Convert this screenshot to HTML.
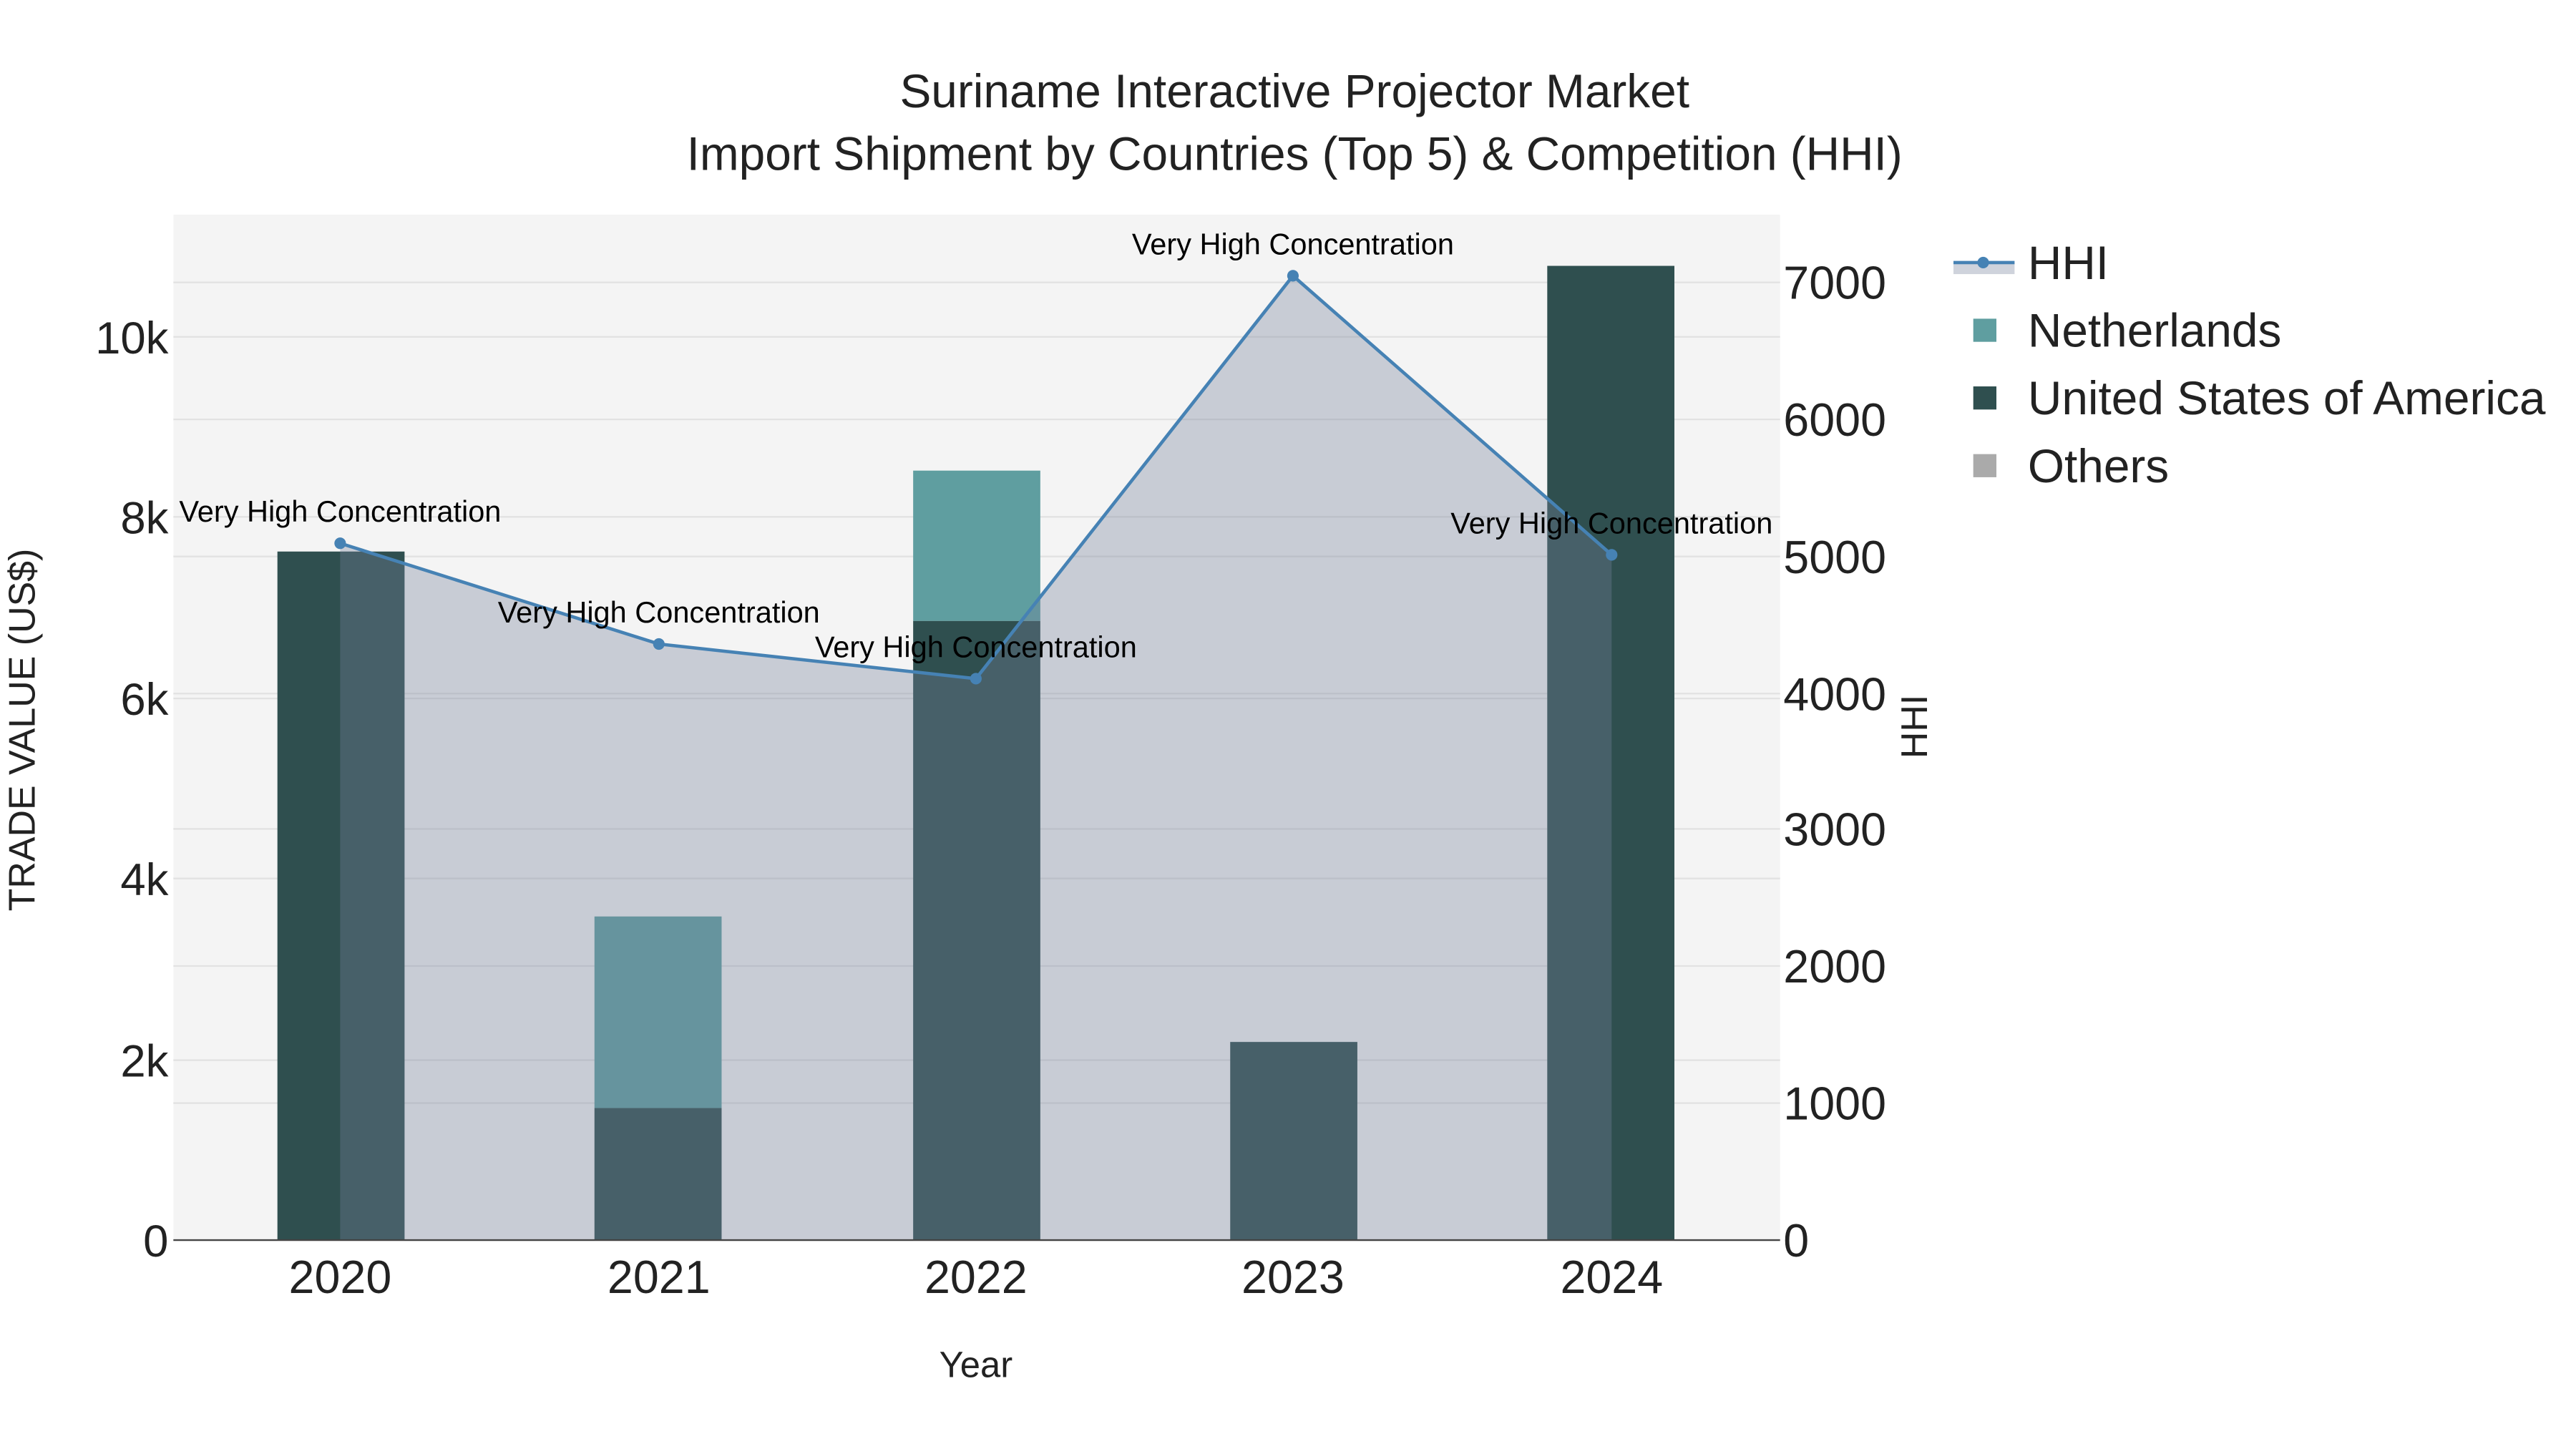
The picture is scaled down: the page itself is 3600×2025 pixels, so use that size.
<!DOCTYPE html>
<html><head><meta charset="utf-8"><style>
html,body{margin:0;padding:0;background:#fff;}
svg{display:block;}
text{font-family:"Liberation Sans",sans-serif;}
</style></head><body>
<svg width="3600" height="2025" viewBox="0 0 1560 877.5" xmlns="http://www.w3.org/2000/svg">
<rect x="0" y="0" width="1560" height="877.5" fill="#fff"/>
<rect x="105" y="130" width="973" height="621" fill="#f4f4f4"/>
<g stroke="#e2e2e2" stroke-width="1">
<line x1="105" x2="1078" y1="204" y2="204"/><line x1="105" x2="1078" y1="313" y2="313"/>
<line x1="105" x2="1078" y1="423" y2="423"/><line x1="105" x2="1078" y1="532" y2="532"/>
<line x1="105" x2="1078" y1="642" y2="642"/>
<line x1="105" x2="1078" y1="171" y2="171"/><line x1="105" x2="1078" y1="254" y2="254"/>
<line x1="105" x2="1078" y1="337" y2="337"/><line x1="105" x2="1078" y1="420" y2="420"/>
<line x1="105" x2="1078" y1="502" y2="502"/><line x1="105" x2="1078" y1="585" y2="585"/>
<line x1="105" x2="1078" y1="668" y2="668"/>
</g>
<rect x="168" y="334" width="77" height="417" fill="#2f4f4f"/>
<rect x="360" y="671" width="77" height="80" fill="#2f4f4f"/>
<rect x="360" y="555" width="77" height="116" fill="#5f9ea0"/>
<rect x="553" y="376" width="77" height="375" fill="#2f4f4f"/>
<rect x="553" y="285" width="77" height="91" fill="#5f9ea0"/>
<rect x="745" y="631" width="77" height="120" fill="#2f4f4f"/>
<rect x="937" y="161" width="77" height="590" fill="#2f4f4f"/>
<polygon points="206,751 206,329 399,390 591,411 783,167 976,336 976,751" fill="rgb(118,129,155)" fill-opacity="0.35"/>
<polyline points="206,329 399,390 591,411 783,167 976,336" fill="none" stroke="#4682b4" stroke-width="2"/>
<g fill="#4682b4"><circle cx="206" cy="329" r="3.5"/><circle cx="399" cy="390" r="3.5"/><circle cx="591" cy="411" r="3.5"/><circle cx="783" cy="167" r="3.5"/><circle cx="976" cy="336" r="3.5"/></g>
<line x1="105" x2="1078" y1="751" y2="751" stroke="#444" stroke-width="1"/>
<g font-size="18" fill="#000" text-anchor="middle">
<text x="206" y="316">Very High Concentration</text>
<text x="399" y="377">Very High Concentration</text>
<text x="591" y="398">Very High Concentration</text>
<text x="783" y="154">Very High Concentration</text>
<text x="976" y="323">Very High Concentration</text>
</g>
<g font-size="28.5" fill="#222" text-anchor="middle">
<text x="784" y="65">Suriname Interactive Projector Market</text>
<text x="784" y="103">Import Shipment by Countries (Top 5) &amp; Competition (HHI)</text>
</g>
<g font-size="27.5" fill="#222" text-anchor="end">
<text x="102" y="761">0</text><text x="102" y="652">2k</text><text x="102" y="542">4k</text>
<text x="102" y="433">6k</text><text x="102" y="323">8k</text><text x="102" y="214">10k</text>
</g>
<g font-size="28" fill="#222" text-anchor="start">
<text x="1080" y="761">0</text><text x="1080" y="678">1000</text><text x="1080" y="595">2000</text>
<text x="1080" y="512">3000</text><text x="1080" y="430">4000</text><text x="1080" y="347">5000</text>
<text x="1080" y="264">6000</text><text x="1080" y="181">7000</text>
</g>
<g font-size="28" fill="#222" text-anchor="middle">
<text x="206" y="783">2020</text><text x="399" y="783">2021</text><text x="591" y="783">2022</text>
<text x="783" y="783">2023</text><text x="976" y="783">2024</text>
</g>
<text x="591" y="834" font-size="22" fill="#222" text-anchor="middle">Year</text>
<text transform="translate(21,442) rotate(-90)" font-size="22.5" fill="#222" text-anchor="middle">TRADE VALUE (US$)</text>
<text transform="translate(1167,440) rotate(-90)" font-size="22.5" fill="#222" text-anchor="middle">HHI</text>
<rect x="1183" y="159" width="37" height="7" fill="rgb(118,129,155)" fill-opacity="0.35"/>
<line x1="1183" x2="1220" y1="159" y2="159" stroke="#4682b4" stroke-width="2"/>
<circle cx="1201" cy="159" r="3.5" fill="#4682b4"/>
<rect x="1195" y="193" width="14" height="14" fill="#5f9ea0"/>
<rect x="1195" y="234" width="14" height="14" fill="#2f4f4f"/>
<rect x="1195" y="275" width="14" height="14" fill="#aaaaaa"/>
<g font-size="28.5" fill="#222">
<text x="1228" y="169">HHI</text>
<text x="1228" y="210">Netherlands</text>
<text x="1228" y="251">United States of America</text>
<text x="1228" y="292">Others</text>
</g>
</svg>
</body></html>
